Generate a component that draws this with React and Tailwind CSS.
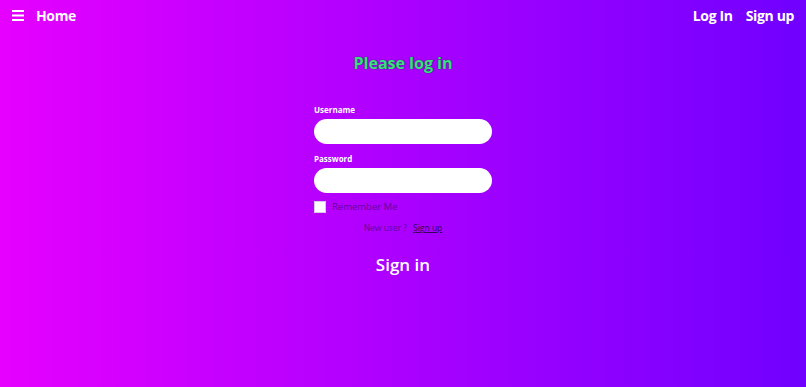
import React, { useState } from "react";

const font = { fontFamily: "'Open Sans', 'Noto Sans', sans-serif" };

const App = () => {
  const [username, setUsername] = useState("");
  const [password, setPassword] = useState("");
  const [remember, setRemember] = useState(false);

  return (
    <div
      className="min-h-screen w-full bg-[linear-gradient(to_right,#e600ff,#7000ff)] flex flex-col"
      style={font}
    >
      <nav className="h-[31px] flex items-center justify-between px-3">
        <div className="flex items-center gap-3">
          <svg width="12" height="11" viewBox="0 0 12 11" className="text-white">
            <rect x="0" y="0" width="12" height="2" fill="currentColor" />
            <rect x="0" y="4.5" width="12" height="2" fill="currentColor" />
            <rect x="0" y="9" width="12" height="2" fill="currentColor" />
          </svg>
          <a href="#" className="text-white font-bold text-[14px] tracking-tight">Home</a>
        </div>
        <div className="flex items-center gap-[13px]">
          <a href="#" className="text-white font-bold text-[14px] tracking-tight">Log In</a>
          <a href="#" className="text-white font-bold text-[14px] tracking-tight">Sign up</a>
        </div>
      </nav>

      <main className="flex flex-col items-center">
        <h1
          className="mt-[20px] text-[16px] font-bold text-[#3fdc86]"
          style={{ textShadow: "0 0 1px #1a3a4a, 0 0 1px #1a3a4a" }}
        >
          Please log in
        </h1>

        <form className="w-[178px] mt-[31px]" onSubmit={e => e.preventDefault()}>
          <label className="block text-white text-[8px] font-bold leading-none mb-[3px]">Username</label>
          <input
            type="text"
            value={username}
            onChange={e => setUsername(e.target.value)}
            className="w-full h-[25px] rounded-full bg-white px-3 text-[10px] outline-none"
          />
          <label className="block text-white text-[8px] font-bold leading-none mt-[11px] mb-[4px]">Password</label>
          <input
            type="password"
            value={password}
            onChange={e => setPassword(e.target.value)}
            className="w-full h-[25px] rounded-full bg-white px-3 text-[10px] outline-none"
          />
          <label className="flex items-center gap-[6px] mt-[7px]">
            <input
              type="checkbox"
              checked={remember}
              onChange={e => setRemember(e.target.checked)}
              className="appearance-none w-[12px] h-[12px] bg-white border border-[#d9c7e6] m-0"
            />
            <span className="text-[9.5px] text-[#6500a0]">Remember Me</span>
          </label>
          <p className="text-center text-[8.5px] mt-[8px] text-[#6500a0]">
            New user ?
            <a href="#" className="ml-[6px] underline text-[#34005a]">Sign up</a>
          </p>
          <div className="flex justify-center mt-[17px]">
            <button type="submit" className="text-white text-[17px] font-semibold">Sign in</button>
          </div>
        </form>
      </main>
    </div>
  );
};

export default App;
